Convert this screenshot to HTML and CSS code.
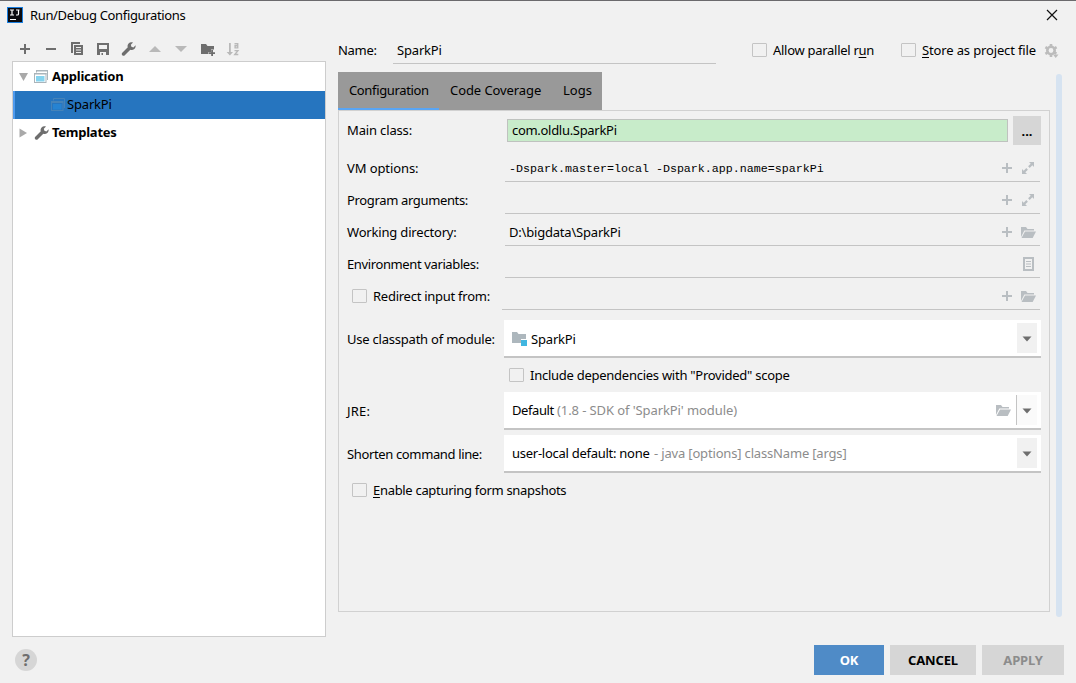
FILE: index.html
```html
<!DOCTYPE html>
<html lang="en">
<head>
<meta charset="utf-8">
<title>Run/Debug Configurations</title>
<link rel="stylesheet" href="styles.css">
</head>
<body>
<svg class="defs" width="0" height="0">
  <symbol id="i-plus" viewBox="0 0 16 16"><path d="M7 3h2v4h4v2H9v4H7V9H3V7h4z"/></symbol>
  <symbol id="i-wrench" viewBox="0 0 16 16"><path d="M14.6 4.2 12.4 6.4 10.4 5.8 9.8 3.8 12 1.6C10.500 .9 8.700 1.200 7.600 2.400 6.500 3.500 6.300 5 6.800 6.300L1.300 11.800c-.7.7-.7 1.800 0 2.500s1.800.7 2.500 0l5.500-5.500c1.400.5 2.900.2 4-.8 1.100-1.100 1.500-2.500 1.300-3.800z"/></symbol>
  <symbol id="i-expand" viewBox="0 0 16 16"><path d="M9 2h5v5l-1.700-1.700-2.600 2.600-1.600-1.600 2.600-2.600zM7 14H2V9l1.700 1.700 2.600-2.600 1.600 1.600-2.600 2.600z"/></symbol>
  <symbol id="i-open" viewBox="0 0 16 16"><path d="M1 13V3h5l1.500 2H14v1.500H4.300z"/><path d="M1.500 14 5 7.500h11L12.700 14z"/></symbol>
  <symbol id="i-down" viewBox="0 0 10 6"><path d="M.5.500h9L5 5.500z"/></symbol>
</svg>
<div class="dialog">
  <header class="titlebar">
    <svg class="logo" width="16" height="16" viewBox="0 0 16 16"><rect width="16" height="16" fill="#1b7fe0"/><rect x="1" y="1" width="14" height="14" fill="#0b0b0f"/><path d="M3 3h4M5 3v5M3 8h4M9 3h3.500M11.500 3v4q0 1-1 1H9M3 12.500h6" stroke="#fff" stroke-width="1.200" fill="none"/></svg>
    <span class="title t">Run/Debug Configurations</span>
    <svg class="close" width="12" height="12" viewBox="0 0 12 12"><path d="M1 1l10 10M11 1L1 11" stroke="#111" stroke-width="1.200"/></svg>
  </header>
  <div class="body">
    <aside class="side">
      <div class="toolbar">
        <svg class="ic"><use href="#i-plus"/></svg>
        <svg class="ic" viewBox="0 0 16 16"><path d="M3 7h10v2H3z"/></svg>
        <svg class="ic" viewBox="0 0 16 16"><path d="M2 1h9v2H4v9H2z"/><path fill-rule="evenodd" d="M5 4h9v10H5zM7 6v1h5V6zM7 8.500v1h5v-1zM7 11v1h5v-1z"/></svg>
        <svg class="ic" viewBox="0 0 16 16"><path fill-rule="evenodd" d="M2 2h12v12H2zM4 4v4h8V4zM5 11v3h1.500v-2H8v2h3v-3z"/></svg>
        <svg class="ic"><use href="#i-wrench"/></svg>
        <svg class="ic off" viewBox="0 0 16 16"><path d="M2 11 8 5l6 6z"/></svg>
        <svg class="ic off" viewBox="0 0 16 16"><path d="M2 5h12l-6 6z"/></svg>
        <svg class="ic" viewBox="0 0 16 16"><path d="M2 3h5l1.500 2H15v3.500h-3V11H9.500v2H2z"/><path d="M12.200 9h1.800v2.200h2.200V13H14v2h-1.800v-2H10v-1.800h2.200z"/></svg>
        <svg class="ic off" viewBox="0 0 16 16"><path d="M4 2h1.800v9H8L4.900 14.500 1.600 11H4z"/><path d="M9.500 2.800h3.200v4.100h-2.600V4.700h2.600M9.500 9.600h3.400L9.800 13.500h3.500" fill="none" stroke="#b9b9b9" stroke-width="1.400"/></svg>
      </div>
      <div class="tree">
        <div class="node">
          <svg class="tw" width="10" height="10" viewBox="0 0 10 10"><path d="M0 1h9L4.500 9z"/></svg>
          <svg class="app" width="16" height="16" viewBox="0 0 16 16"><path d="M2.500 3.500V1.500h11V11" fill="none" stroke="#aab4ba"/><path d="M2 1h12v1.500H2z" fill="#aab4ba"/><rect x=".5" y="4.500" width="11.500" height="9" fill="#fff" stroke="#aab4ba"/><path d="M0 4h12.500v1.500H0z" fill="#aab4ba"/><rect x="2" y="7" width="8.500" height="5.500" fill="#86d3ee"/></svg>
          <b class="t app-l">Application</b>
        </div>
        <div class="node child selected">
          <svg class="app" width="16" height="16" viewBox="0 0 16 16"><path d="M2.500 3.500v-2h11V11" fill="none" stroke="#4583b9"/><rect x=".5" y="4.500" width="11.500" height="9" fill="none" stroke="#4583b9"/><path d="M0 5.500h12" stroke="#4583b9"/><rect x="2" y="7" width="8.500" height="5.500" fill="#2683d2"/></svg>
          <span class="t spark">SparkPi</span>
        </div>
        <div class="node">
          <svg class="tw" width="10" height="10" viewBox="0 0 10 10"><path d="M.5.500v9L8 5z"/></svg>
          <svg class="ic wr"><use href="#i-wrench"/></svg>
          <b class="t tmpl">Templates</b>
        </div>
      </div>
    </aside>
    <main class="main">
      <div class="namerow">
        <label class="t name-l">Name:</label>
        <div class="namefield"><span class="t spark">SparkPi</span></div>
        <i class="box"></i><span class="t allow">Allow parallel r<u>u</u>n</span>
        <i class="box"></i><span class="t store"><u>S</u>tore as project file</span>
        <svg class="gear" width="16" height="16" viewBox="0 0 16 16"><circle cx="7" cy="7.500" r="3.700" fill="none" stroke="#bcbcbc" stroke-width="2.600"/><path d="M7 1v2.500M7 11.500V14M1.400 4.200l2 1.200M10.600 9.600l1.800 1M1.400 10.800l2-1.200M10.600 5.400l2-1.200" stroke="#bcbcbc" stroke-width="2.600"/><path d="M9 11.500h5.500L11.700 15z" fill="#bcbcbc"/></svg>
      </div>
      <nav class="tabs">
        <span class="tab on"><span class="t conf">Configuration</span></span>
        <span class="tab"><span class="t cov">Code Coverage</span></span>
        <span class="tab"><span class="t logs">Logs</span></span>
      </nav>
      <section class="panel">
        <div class="row first">
          <label class="lab"><span class="t mainc">Main class:</span></label>
          <div class="green"><span class="t com">com.oldlu.SparkPi</span></div>
          <button class="dots">...</button>
        </div>
        <div class="row"><label class="lab"><span class="t vm">VM options:</span></label><div class="line"><span class="val mono t">-Dspark.master=local -Dspark.app.name=sparkPi</span><svg class="fi"><use href="#i-plus"/></svg><svg class="fi"><use href="#i-expand"/></svg></div></div>
        <div class="row"><label class="lab"><span class="t prog">Program arguments:</span></label><div class="line"><svg class="fi"><use href="#i-plus"/></svg><svg class="fi"><use href="#i-expand"/></svg></div></div>
        <div class="row"><label class="lab"><span class="t work">Working directory:</span></label><div class="line"><span class="val t dir">D:\bigdata\SparkPi</span><svg class="fi"><use href="#i-plus"/></svg><svg class="fi"><use href="#i-open"/></svg></div></div>
        <div class="row"><label class="lab"><span class="t env">Environment variables:</span></label><div class="line"><svg class="fi" viewBox="0 0 16 16"><path fill-rule="evenodd" d="M3 1h11v14H3zM5 3v10h7V3z"/><path d="M6 5h5v1H6zM6 7.500h5v1H6zM6 10h5v1H6z"/></svg></div></div>
        <div class="row redirect"><label class="lab chk"><i class="box"></i><span class="t redir">Redirect input from:</span></label><div class="line"><svg class="fi"><use href="#i-plus"/></svg><svg class="fi"><use href="#i-open"/></svg></div></div>
        <div class="crow mod"><label class="lab"><span class="t use">Use classpath of module:</span></label>
          <div class="combo"><svg class="mi" width="16" height="16" viewBox="0 0 16 16"><path d="M0 2h5l1.500 2H14v5H9v4H0z" fill="#adb7bd"/><rect x="9" y="10" width="6" height="6" fill="#40b6e0"/></svg><span class="t spark">SparkPi</span><span class="arrow"><svg width="10" height="6"><use href="#i-down"/></svg></span></div></div>
        <div class="include"><i class="box"></i><span class="t incl">Include dependencies with "Provided" scope</span></div>
        <div class="crow jre"><label class="lab"><span class="t jrel">JRE:</span></label>
          <div class="combo"><span class="t def">Default</span><span class="t hint sdk">(1.8 - SDK of 'SparkPi' module)</span><svg class="fi cf"><use href="#i-open"/></svg><span class="arrow split"><svg width="10" height="6"><use href="#i-down"/></svg></span></div></div>
        <div class="crow short"><label class="lab"><span class="t shor">Shorten command line:</span></label>
          <div class="combo"><span class="t user">user-local default: none</span><span class="t hint java">- java [options] className [args]</span><span class="arrow"><svg width="10" height="6"><use href="#i-down"/></svg></span></div></div>
        <div class="enable"><i class="box"></i><span class="t enab"><u>E</u>nable capturing form snapshots</span></div>
      </section>
    </main>
    <div class="scroll"></div>
  </div>
  <footer class="footer">
    <span class="help">?</span>
    <button class="btn ok">OK</button>
    <button class="btn cancel">CANCEL</button>
    <button class="btn apply">APPLY</button>
  </footer>
</div>
</body>
</html>
```
FILE: styles.css
```css
* { box-sizing: border-box; }
body { margin: 0; background: #f1f1f1; font: 13px/18px "Noto Sans", "Open Sans", sans-serif; color: #000; }
.defs { position: absolute; }
svg { display: block; flex: none; }
.t { white-space: pre; }
u { text-underline-offset: 2px; }
.dialog { width: 1076px; height: 683px; display: flex; flex-direction: column; border-top: 1px solid #6b6a6d; }

.titlebar { height: 35px; display: flex; align-items: flex-start; padding: 6px 18px 0 7px; }
.titlebar .title { margin: -1px 0 0 7px; letter-spacing: -.35px; }
.close { margin: 2px 0 0 auto; }

.body { display: flex; height: 601px; padding-left: 12px; }
.side { width: 314px; display: flex; flex-direction: column; }
.toolbar { height: 25px; padding: 5px 0 0 5px; display: flex; gap: 10px; }
.ic { width: 16px; height: 16px; fill: #6e6e6e; }
.off { fill: #b9b9b9; }

.tree { flex: 1; background: #fff; border: 1px solid #cdcdcd; padding-top: 1px; }
.node { height: 28px; display: flex; align-items: center; padding-left: 6px; }
.node .t { margin-top: -2px; }
.tw { fill: #a9a9a9; margin-right: 5px; }
.app, .wr { margin-right: 2px; }
.child { padding-left: 36px; }
.child .app { margin-right: 0; }
.selected { background: #2675bf; border-left: 2px solid #4f9bee; }
.app-l { letter-spacing: -.22px; }
.tmpl { letter-spacing: -.25px; }
.spark { letter-spacing: -.18px; }

.main { width: 712px; margin-left: 12px; }
.namerow { display: flex; height: 36px; align-items: flex-start; padding-top: 5px; }
.name-l { width: 55px; letter-spacing: -.3px; }
.namefield { width: 323px; height: 23px; border-bottom: 1px solid #c4c4c4; padding-left: 4px; margin-right: 36px; }
.box { width: 15px; height: 14px; border: 1px solid #c4c4c4; border-radius: 1px; flex: none; margin-right: 6px; }
.namerow .box { margin-top: 2px; }
.allow { width: 128px; letter-spacing: -.28px; }
.store { width: 122px; letter-spacing: -.14px; }
.gear { margin-top: 2px; margin-right: -10px; }

.tabs { display: flex; width: 264px; height: 38px; background: #999; }
.tab { padding: 9px 11px 0; }
.tab.on { width: 101px; border-bottom: 2px solid #58a5f5; }
.tab:nth-child(2) { width: 113px; }
.conf { letter-spacing: -.36px; }
.cov { letter-spacing: -.08px; }

.panel { height: 502px; border: 1px solid #d1d1d1; padding: 5px 0 0 8px; }
.row { height: 32px; display: flex; align-items: flex-end; }
.lab { width: 158px; flex: none; height: 26px; display: flex; padding-top: 3px; }
.first { height: 34px; align-items: flex-start; }
.first .lab { width: 160px; padding-top: 5px; }
.green { width: 501px; height: 23px; margin-top: 3px; border: 1px solid #bfc2bf; background: #c8ecca; padding: 1px 4px; }
.dots { margin-left: 5px; width: 28px; height: 29px; border: 0; background: #d6d6d6; font: bold 13px/18px "Noto Sans", sans-serif; padding: 0; }
.line { width: 535px; height: 26px; border-bottom: 1px solid #c4c4c4; display: flex; align-items: flex-start; padding: 4px 4px 0; justify-content: flex-end; gap: 5px; }
.val { margin-right: auto; line-height: 16px; }
.mono { font: 11.67px/16px "Liberation Mono", monospace; margin-top: 1px; }
.fi { width: 16px; height: 16px; fill: #b9bec2; }
.redirect .lab { width: 155px; }
.redirect .line { width: 538px; }
.chk { padding-left: 5px; }
.chk .box { margin-top: 2px; }
.mainc { letter-spacing: -.15px; }
.com { letter-spacing: -.3px; }
.vm { letter-spacing: -.1px; }
.prog { letter-spacing: -.35px; }
.work { letter-spacing: -.18px; }
.dir { letter-spacing: -.2px; }
.env { letter-spacing: -.38px; }
.redir { letter-spacing: -.26px; }

.crow { display: flex; height: 38px; }
.crow .lab { width: 157px; padding-top: 10px; }
.mod { margin-top: 10px; }
.combo { width: 537px; background: #fff; border-bottom: 2px solid #c4c4c4; display: flex; align-items: center; padding: 0 4px 0 8px; }
.mod .spark { margin-top: 1px; }
.mi { margin-right: 3px; }
.arrow { width: 20px; height: 30px; background: #f1f1f1; margin-left: auto; display: flex; align-items: center; justify-content: center; fill: #6e6e6e; padding: 2px 1px 0 0; }
.split { background: #fafafa; border-left: 1px solid #c4c4c4; margin-left: 5px; width: 21px; }
.cf { margin-left: auto; }
.hint { color: #8c8c8c; }
.use { letter-spacing: -.22px; }
.jrel { letter-spacing: .2px; }
.def { width: 45px; letter-spacing: -.4px; }
.sdk { letter-spacing: -.09px; }
.shor { letter-spacing: -.36px; }
.user { width: 142px; letter-spacing: -.27px; }
.java { letter-spacing: -.17px; }
.include { height: 34px; display: flex; padding: 8px 0 0 162px; }
.include .box { margin-top: 2px; }
.incl { letter-spacing: -.26px; }
.short { margin-top: 5px; }
.enable { display: flex; padding: 8px 0 0 5px; }
.enable .box { margin-top: 2px; }
.enab { letter-spacing: -.31px; }

.scroll { width: 6px; height: 543px; margin: 38px 0 0 6px; border-radius: 3px; background: #d6e3f1; }

.footer { display: flex; padding: 8px 12px 0 15px; gap: 6px; }
.help { width: 22px; height: 22px; border-radius: 50%; background: #d6d6d6; color: #6e6e6e; font-weight: bold; font-size: 16px; line-height: 22px; text-align: center; margin: 4px auto 0 0; }
.btn { height: 30px; border: 0; padding: 0; background: #d6d6d6; font: bold 13px/18px "Noto Sans", sans-serif; color: #000; letter-spacing: -.15px; }
.ok { width: 70px; background: #4f8bc7; color: #fff; }
.cancel { width: 86px; }
.apply { width: 82px; color: #8c8c8c; }
```
